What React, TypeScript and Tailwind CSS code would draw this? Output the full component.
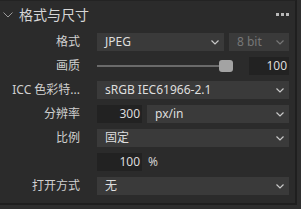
import React from "react";

const font = { fontFamily: '"Noto Sans", "Noto Sans CJK SC", sans-serif' };

function Chevron({ color = "#c8c8c8" }: { color?: string }) {
  return (
    <svg width="8" height="5" viewBox="0 0 8 5" className="shrink-0">
      <path d="M0.5 0.5 L4 4 L7.5 0.5" fill="none" stroke={color} strokeWidth="1.2" />
    </svg>
  );
}

function Select({ text, className = "", muted = false }: { text: string; className?: string; muted?: boolean }) {
  return (
    <div className={`h-[18px] bg-[#3a3a3a] flex items-center justify-between pl-[8px] pr-[5px] ${className}`}>
      <span className={`text-[12px] leading-none ${muted ? "text-[#777777]" : "text-[#dedede]"}`}>{text}</span>
      <Chevron color={muted ? "#777777" : "#c8c8c8"} />
    </div>
  );
}

function NumBox({ text, className = "" }: { text: string; className?: string }) {
  return (
    <div className={`h-[18px] bg-[#222222] flex items-center justify-end pr-[2px] ${className}`}>
      <span className="text-[12px] leading-none text-[#dcdcdc]">{text}</span>
    </div>
  );
}

function Row({ label, children }: { label: string; children?: React.ReactNode }) {
  return (
    <div className="flex items-center h-[18px]">
      <div className="w-[80px] text-right text-[12px] leading-none text-[#d0d0d0] whitespace-nowrap">{label}</div>
      <div className="ml-[17px] w-[192px] flex items-center">{children}</div>
    </div>
  );
}

export default function App() {
  return (
    <div className="w-[301px] h-[209px] bg-[#2e2e2e] overflow-hidden" style={font}>
      <div className="w-[297px] h-[205px] bg-[#2b2b2b] border-t border-t-[#232323] border-r-2 border-r-[#1f1f1f] border-b-2 border-b-[#1f1f1f]">
        <div className="h-[27px] flex items-center relative">
          <svg width="10" height="6" viewBox="0 0 10 6" className="ml-[3px]">
            <path d="M0.5 0.5 L5 5 L9.5 0.5" fill="none" stroke="#9a9a9a" strokeWidth="1" />
          </svg>
          <span className="ml-[6px] text-[14px] leading-none text-[#d6d6d6]">格式与尺寸</span>
          <div className="absolute left-[276px] top-[12px] flex gap-[2px]">
            <div className="w-[3px] h-[3px] bg-[#b8b8b8]" />
            <div className="w-[3px] h-[3px] bg-[#b8b8b8]" />
            <div className="w-[3px] h-[3px] bg-[#b8b8b8]" />
          </div>
        </div>
        <div className="pt-[5px] flex flex-col gap-[6px]">
          <Row label="格式">
            <Select text="JPEG" className="w-[127px]" />
            <Select text="8 bit" className="w-[60px] ml-[5px]" muted />
          </Row>
          <Row label="画质">
            <div className="w-[136px] h-[12px] relative flex items-center">
              <div className="w-[124px] h-[2px] bg-[#6a6a6a]" />
              <div className="absolute left-[122px] top-0 w-[14px] h-[12px] rounded-[3px] bg-[#a3a3a3]" />
            </div>
            <NumBox text="100" className="w-[40px] ml-[16px]" />
          </Row>
          <Row label="ICC 色彩特...">
            <Select text="sRGB IEC61966-2.1" className="w-[192px]" />
          </Row>
          <Row label="分辨率">
            <NumBox text="300" className="w-[45px]" />
            <Select text="px/in" className="w-[142px] ml-[5px]" />
          </Row>
          <Row label="比例">
            <Select text="固定" className="w-[192px]" />
          </Row>
          <Row label="">
            <NumBox text="100" className="w-[45px]" />
            <span className="ml-[6px] text-[12px] leading-none text-[#d0d0d0]">%</span>
          </Row>
          <Row label="打开方式">
            <Select text="无" className="w-[192px]" />
          </Row>
        </div>
      </div>
    </div>
  );
}
